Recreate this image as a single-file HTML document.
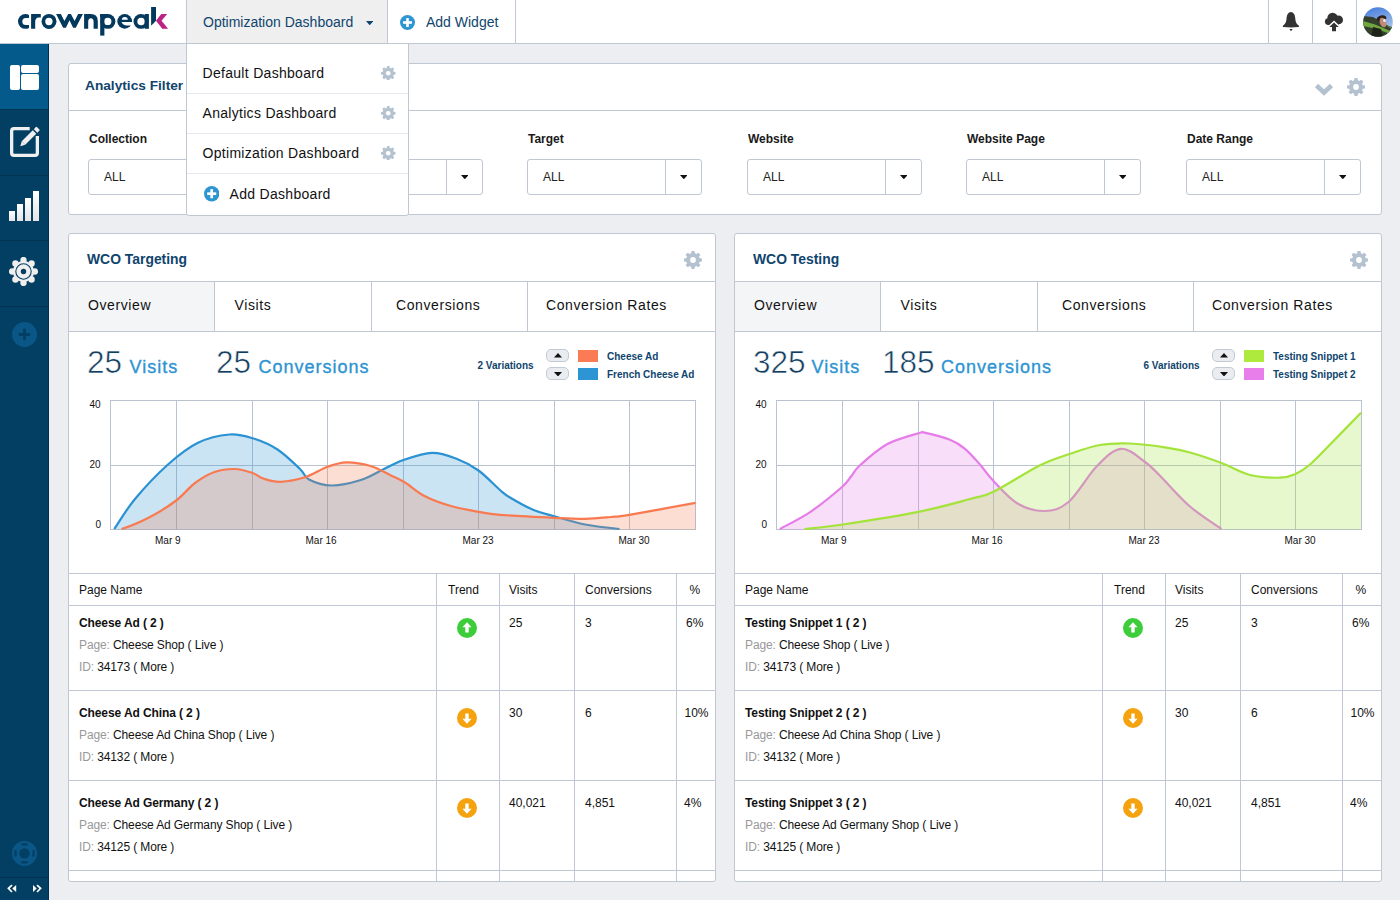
<!DOCTYPE html>
<html><head><meta charset="utf-8"><title>Optimization Dashboard</title>
<style>
html,body{margin:0;padding:0}
body{width:1400px;height:900px;position:relative;overflow:hidden;background:#eceef1;font-family:"Liberation Sans",sans-serif}
.t{position:absolute;line-height:1;white-space:nowrap}
.panel{position:absolute;background:#fff;border:1px solid #bfc7d2;border-radius:3px}
.sel{position:absolute;background:#fff;border:1px solid #bfc7d2;border-radius:3px}
.ub{position:absolute;width:21px;height:11px;background:#e9edf1;border:1px solid #c2cad4;border-radius:5px}
</style></head><body>
<div style="position:absolute;left:0px;top:0px;width:1400px;height:43px;background:#fff"></div><div style="position:absolute;left:0px;top:43px;width:1400px;height:1px;background:#bfc7d2"></div><svg style="position:absolute;left:0;top:0" width="180" height="43" viewBox="0 0 180 43"><defs><clipPath id="cc"><rect x="0" y="0" width="28.9" height="43"/></clipPath></defs><g fill="#03395d"><circle cx="25.4" cy="21.4" r="7.4" clip-path="url(#cc)"/><path d="M31.1 28.8 V14 H40.8 V17.4 H38.8 Q35.2 17.4 35.2 22 V28.8 Z"/><circle cx="49" cy="21.4" r="7.5"/><path d="M56.1 14 L60.9 14 L64.4 21 L68.2 14 L70.9 14 L74.6 21 L78.1 14 L82.9 14 L75.8 27.8 L73.1 27.8 L69.5 20.3 L65.9 27.8 L63.1 27.8 Z"/><path d="M84.1 28.8 V14 H90.8 Q97.8 14 97.8 21.2 V28.8 H93.6 V21.8 Q93.6 18.2 90.9 18.2 Q88.2 18.2 88.2 21.8 V28.8 Z"/><circle cx="107.9" cy="21.4" r="7.45"/><circle cx="124.7" cy="21.4" r="7.35"/><circle cx="140.9" cy="21.4" r="7.4"/></g><g fill="#fff"><path d="M30 18 H25.8 A3.5 3.5 0 0 0 25.8 25 H30 Z"/><circle cx="48.9" cy="21.5" r="3.65"/><circle cx="107.7" cy="21.4" r="3.7"/><path d="M121.8 19.8 A3 2.9 0 0 1 127.8 19.8 Z"/><path d="M121.5 22.1 H133 V25.4 H126.5 Q123 25.6 121.5 22.1 Z"/><circle cx="141.1" cy="21.45" r="3.75"/></g><g fill="#03395d"><rect x="100.2" y="14" width="4.2" height="21.6"/><rect x="100.2" y="14" width="7.5" height="3.3"/><rect x="144.7" y="14" width="4.2" height="14.8"/><path d="M151.1 7 H156 V20.7 L151.1 25.7 Z"/></g><path d="M156 20.7 L161.3 14 H167.2 L161.5 20.7 L168.1 28.8 H162.3 Z" fill="#bc2284"/></svg><div style="position:absolute;left:186px;top:0px;width:1px;height:43px;background:#bfc7d2"></div><div style="position:absolute;left:187px;top:0px;width:200px;height:43px;background:#efefef"></div><div style="position:absolute;left:387px;top:0px;width:1px;height:43px;background:#bfc7d2"></div><div class="t" style="left:203px;top:15.15px;font-size:14px;font-weight:normal;color:#0f456d;">Optimization Dashboard</div><svg style="position:absolute;left:365.7px;top:20.85px" width="7.4" height="4.3" viewBox="0 0 7.4 4.3"><path d="M0 0 L7.4 0 L3.7 4.3 Z" fill="#0f456d"/></svg><svg style="position:absolute;left:400.0px;top:15.0px" width="15.0" height="15.0" viewBox="0 0 15.0 15.0"><circle cx="7.5" cy="7.5" r="7.5" fill="#2e95d3"/><rect x="6.19" y="3.08" width="2.62" height="8.85" fill="#fff"/><rect x="3.08" y="6.19" width="8.85" height="2.62" fill="#fff"/></svg><div class="t" style="left:426px;top:15.15px;font-size:14px;font-weight:normal;color:#0f456d;">Add Widget</div><div style="position:absolute;left:515px;top:0px;width:1px;height:43px;background:#bfc7d2"></div><div style="position:absolute;left:1268px;top:0px;width:1px;height:43px;background:#bfc7d2"></div><div style="position:absolute;left:1312px;top:0px;width:1px;height:43px;background:#bfc7d2"></div><div style="position:absolute;left:1356px;top:0px;width:1px;height:43px;background:#bfc7d2"></div><svg style="position:absolute;left:1280px;top:10px" width="22" height="24" viewBox="0 0 22 24"><path d="M10.9 2 C8.3 2.5 6.9 4.3 6.6 7.8 C6.3 11.5 5.9 13.6 3.2 15.5 C2.4 16.1 2.7 17 3.6 17.1 Q11 17.9 18.2 17.1 C19.1 17 19.4 16.1 18.6 15.5 C15.9 13.6 15.5 11.5 15.2 7.8 C14.9 4.3 13.5 2.5 10.9 2 Z" fill="#333"/><path d="M9.3 19 H12.7 L11 21.2 Z" fill="#333"/></svg><svg style="position:absolute;left:1322px;top:10px" width="24" height="24" viewBox="0 0 24 24"><g fill="#333"><circle cx="10.6" cy="8.1" r="5.3"/><circle cx="16.6" cy="9.9" r="4.4"/><circle cx="6.3" cy="11.6" r="3.4"/><rect x="6.3" y="9.5" width="10.3" height="5.6"/></g><path d="M4.6 17.6 L12 10.6 L19.4 17.6 Z" fill="#fff"/><path d="M7.3 17 L12 12.5 L16.7 17 H14 V21.2 H10 V17 Z" fill="#333"/></svg><svg style="position:absolute;left:1363px;top:7px" width="30" height="30" viewBox="0 0 30 30"><defs><clipPath id="av"><circle cx="15" cy="15" r="14.8"/></clipPath><linearGradient id="sky" x1="0" y1="0" x2="0.3" y2="1"><stop offset="0" stop-color="#3f78dc"/><stop offset="1" stop-color="#b5cdea"/></linearGradient></defs><g clip-path="url(#av)"><rect width="30" height="30" fill="url(#sky)"/><path d="M0 9 L10 10 L22 17 L30 21 V30 H0 Z" fill="#34402c"/><path d="M0 14 L12 17.5 L30 25 V28 L14 22 L0 19 Z" fill="#6fa83e"/><path d="M30 20 L22 18 L30 23 Z" fill="#5c7a5a"/><ellipse cx="18.5" cy="11.5" rx="5" ry="3.2" fill="#2c211c" transform="rotate(-15 18.5 11.5)"/><ellipse cx="20" cy="15.5" rx="3.2" ry="5" fill="#c08a74" transform="rotate(-20 20 15.5)"/><ellipse cx="21.5" cy="13.5" rx="1.4" ry="1.8" fill="#e8e4e8"/><path d="M8 30 L10 20 L18 22 L20 30 Z" fill="#1f2418"/></g></svg><div style="position:absolute;left:0px;top:44px;width:48px;height:856px;background:#033f63"></div><div style="position:absolute;left:48px;top:44px;width:1px;height:856px;background:#022f4b"></div><div style="position:absolute;left:0px;top:44px;width:48px;height:65px;background:#045a8b"></div><div style="position:absolute;left:0px;top:109px;width:48px;height:1px;background:#033351"></div><div style="position:absolute;left:0px;top:175px;width:48px;height:1px;background:#033351"></div><div style="position:absolute;left:0px;top:240px;width:48px;height:1px;background:#033351"></div><div style="position:absolute;left:0px;top:306px;width:48px;height:1px;background:#033351"></div><div style="position:absolute;left:0px;top:877px;width:48px;height:1px;background:#033351"></div><div style="position:absolute;left:10px;top:65px;width:10px;height:25px;background:#fff;border-radius:2px"></div><div style="position:absolute;left:21px;top:65px;width:18px;height:8px;background:#fff;border-radius:2px"></div><div style="position:absolute;left:21px;top:74px;width:18px;height:16px;background:#fff;border-radius:2px"></div><svg style="position:absolute;left:8px;top:125px" width="34" height="34" viewBox="0 0 34 34"><path d="M21.7 3.65 H6 Q3.65 3.65 3.65 6 V28 Q3.65 30.35 6 30.35 H27 Q29.35 30.35 29.35 28 V11" fill="none" stroke="#f0f0f0" stroke-width="3.3"/><path d="M13.73 16.23 L24.73 5.23 L28.27 8.77 L17.27 19.77 Z" fill="#f0f0f0"/><path d="M13.73 16.23 L17.27 19.77 L12.3 21.2 Z" fill="#f0f0f0"/><path d="M25.83 4.13 L27.9 2.06 Q28.4 1.56 28.9 2.06 L31.45 4.6 Q31.95 5.1 31.45 5.6 L29.37 7.67 Z" fill="#f0f0f0"/></svg><div style="position:absolute;left:9px;top:211px;width:6px;height:10px;background:linear-gradient(#fff,#e4e4e4)"></div><div style="position:absolute;left:17px;top:204px;width:6px;height:17px;background:linear-gradient(#fff,#e4e4e4)"></div><div style="position:absolute;left:25px;top:197.5px;width:6px;height:23.5px;background:linear-gradient(#fff,#e4e4e4)"></div><div style="position:absolute;left:33px;top:191px;width:6px;height:30px;background:linear-gradient(#fff,#e4e4e4)"></div><svg style="position:absolute;left:9.2px;top:256.8px" width="29" height="29" viewBox="0 0 29 29"><g fill="#efefef"><circle cx="14.5" cy="14.5" r="10.6"/><circle cx="25.90" cy="14.50" r="3.2"/><circle cx="22.56" cy="22.56" r="3.2"/><circle cx="14.50" cy="25.90" r="3.2"/><circle cx="6.44" cy="22.56" r="3.2"/><circle cx="3.10" cy="14.50" r="3.2"/><circle cx="6.44" cy="6.44" r="3.2"/><circle cx="14.50" cy="3.10" r="3.2"/><circle cx="22.56" cy="6.44" r="3.2"/></g><circle cx="14.5" cy="14.5" r="7.7" fill="none" stroke="#033f63" stroke-width="1.1"/><circle cx="14.5" cy="14.5" r="2.7" fill="#033f63"/></svg><svg style="position:absolute;left:12.0px;top:322.0px" width="25.0" height="25.0" viewBox="0 0 25.0 25.0"><circle cx="12.5" cy="12.5" r="12.5" fill="#0a5787"/><rect x="11.10" y="6.75" width="2.80" height="11.50" fill="#033f63"/><rect x="6.75" y="11.10" width="11.50" height="2.80" fill="#033f63"/></svg><svg style="position:absolute;left:11px;top:840px" width="27" height="27" viewBox="0 0 27 27"><circle cx="13.5" cy="13.4" r="12.5" fill="#0a5787"/><circle cx="13.5" cy="13.4" r="5.2" fill="#033f63"/><g fill="#033f63"><rect x="10.1" y="3.25" width="6.8" height="2.3" rx="1.1"/><rect x="10.1" y="21.25" width="6.8" height="2.3" rx="1.1"/><rect x="3.35" y="10" width="2.3" height="6.8" rx="1.1"/><rect x="21.35" y="10" width="2.3" height="6.8" rx="1.1"/></g></svg><svg style="position:absolute;left:0;top:878px" width="49" height="22" viewBox="0 0 49 22"><path d="M12 7.1 L8.4 10.4 L12 14" fill="none" stroke="#fff" stroke-width="1.7"/><path d="M12.3 10.4 L16.2 7 V14 Z" fill="#fff"/><path d="M33 7 V14 L36.7 10.4 Z" fill="#fff"/><path d="M37 7.1 L40.6 10.4 L37 14" fill="none" stroke="#fff" stroke-width="1.7"/></svg><div class="panel" style="left:68px;top:63px;width:1312px;height:150px"></div><div style="position:absolute;left:69px;top:110px;width:1312px;height:1px;background:#bfc7d2"></div><div class="t" style="left:85px;top:79.40px;font-size:13.7px;font-weight:bold;color:#0f456d;">Analytics Filter</div><svg style="position:absolute;left:1314px;top:81px" width="20" height="16" viewBox="0 0 20 16"><path d="M2.5 4.5 L10 11.5 L17.5 4.5" fill="none" stroke="#b4c2d0" stroke-width="4.6"/></svg><svg style="position:absolute;left:1347px;top:78px" width="18" height="18" viewBox="0 0 18 18"><circle cx="9.0" cy="9.0" r="6.93" fill="#b4c2d0"/><rect x="7.20" y="0" width="3.60" height="9.00" rx="1.08" fill="#b4c2d0" transform="rotate(0 9.0 9.0)"/><rect x="7.20" y="0" width="3.60" height="9.00" rx="1.08" fill="#b4c2d0" transform="rotate(45 9.0 9.0)"/><rect x="7.20" y="0" width="3.60" height="9.00" rx="1.08" fill="#b4c2d0" transform="rotate(90 9.0 9.0)"/><rect x="7.20" y="0" width="3.60" height="9.00" rx="1.08" fill="#b4c2d0" transform="rotate(135 9.0 9.0)"/><rect x="7.20" y="0" width="3.60" height="9.00" rx="1.08" fill="#b4c2d0" transform="rotate(180 9.0 9.0)"/><rect x="7.20" y="0" width="3.60" height="9.00" rx="1.08" fill="#b4c2d0" transform="rotate(225 9.0 9.0)"/><rect x="7.20" y="0" width="3.60" height="9.00" rx="1.08" fill="#b4c2d0" transform="rotate(270 9.0 9.0)"/><rect x="7.20" y="0" width="3.60" height="9.00" rx="1.08" fill="#b4c2d0" transform="rotate(315 9.0 9.0)"/><circle cx="9.0" cy="9.0" r="2.88" fill="#fff"/></svg><div class="t" style="left:89px;top:132.84px;font-size:12px;font-weight:bold;color:#1a1a1a;">Collection</div><div class="sel" style="left:88px;top:159px;width:173px;height:34px"></div><div style="position:absolute;left:226px;top:160px;width:1px;height:34px;background:#bfc7d2"></div><div class="t" style="left:104px;top:170.84px;font-size:12px;font-weight:normal;color:#222;">ALL</div><svg style="position:absolute;left:240.5px;top:175.04999999999998px" width="7.6" height="4.3" viewBox="0 0 7.6 4.3"><path d="M0 0 L7.6 0 L3.8 4.3 Z" fill="#111"/></svg><div class="t" style="left:309px;top:132.84px;font-size:12px;font-weight:bold;color:#1a1a1a;">Segment</div><div class="sel" style="left:308px;top:159px;width:173px;height:34px"></div><div style="position:absolute;left:446px;top:160px;width:1px;height:34px;background:#bfc7d2"></div><div class="t" style="left:324px;top:170.84px;font-size:12px;font-weight:normal;color:#222;">ALL</div><svg style="position:absolute;left:460.5px;top:175.04999999999998px" width="7.6" height="4.3" viewBox="0 0 7.6 4.3"><path d="M0 0 L7.6 0 L3.8 4.3 Z" fill="#111"/></svg><div class="t" style="left:528px;top:132.84px;font-size:12px;font-weight:bold;color:#1a1a1a;">Target</div><div class="sel" style="left:527px;top:159px;width:173px;height:34px"></div><div style="position:absolute;left:665px;top:160px;width:1px;height:34px;background:#bfc7d2"></div><div class="t" style="left:543px;top:170.84px;font-size:12px;font-weight:normal;color:#222;">ALL</div><svg style="position:absolute;left:679.5px;top:175.04999999999998px" width="7.6" height="4.3" viewBox="0 0 7.6 4.3"><path d="M0 0 L7.6 0 L3.8 4.3 Z" fill="#111"/></svg><div class="t" style="left:748px;top:132.84px;font-size:12px;font-weight:bold;color:#1a1a1a;">Website</div><div class="sel" style="left:747px;top:159px;width:173px;height:34px"></div><div style="position:absolute;left:885px;top:160px;width:1px;height:34px;background:#bfc7d2"></div><div class="t" style="left:763px;top:170.84px;font-size:12px;font-weight:normal;color:#222;">ALL</div><svg style="position:absolute;left:899.5px;top:175.04999999999998px" width="7.6" height="4.3" viewBox="0 0 7.6 4.3"><path d="M0 0 L7.6 0 L3.8 4.3 Z" fill="#111"/></svg><div class="t" style="left:967px;top:132.84px;font-size:12px;font-weight:bold;color:#1a1a1a;">Website Page</div><div class="sel" style="left:966px;top:159px;width:173px;height:34px"></div><div style="position:absolute;left:1104px;top:160px;width:1px;height:34px;background:#bfc7d2"></div><div class="t" style="left:982px;top:170.84px;font-size:12px;font-weight:normal;color:#222;">ALL</div><svg style="position:absolute;left:1118.5px;top:175.04999999999998px" width="7.6" height="4.3" viewBox="0 0 7.6 4.3"><path d="M0 0 L7.6 0 L3.8 4.3 Z" fill="#111"/></svg><div class="t" style="left:1187px;top:132.84px;font-size:12px;font-weight:bold;color:#1a1a1a;">Date Range</div><div class="sel" style="left:1186px;top:159px;width:173px;height:34px"></div><div style="position:absolute;left:1324px;top:160px;width:1px;height:34px;background:#bfc7d2"></div><div class="t" style="left:1202px;top:170.84px;font-size:12px;font-weight:normal;color:#222;">ALL</div><svg style="position:absolute;left:1338.5px;top:175.04999999999998px" width="7.6" height="4.3" viewBox="0 0 7.6 4.3"><path d="M0 0 L7.6 0 L3.8 4.3 Z" fill="#111"/></svg><div class="panel" style="left:68px;top:233px;width:646px;height:647px"></div><div class="t" style="left:87px;top:253.23px;font-size:13.9px;font-weight:bold;color:#0f456d;">WCO Targeting</div><svg style="position:absolute;left:684px;top:251px" width="18" height="18" viewBox="0 0 18 18"><circle cx="9.0" cy="9.0" r="6.93" fill="#b4c2d0"/><rect x="7.20" y="0" width="3.60" height="9.00" rx="1.08" fill="#b4c2d0" transform="rotate(0 9.0 9.0)"/><rect x="7.20" y="0" width="3.60" height="9.00" rx="1.08" fill="#b4c2d0" transform="rotate(45 9.0 9.0)"/><rect x="7.20" y="0" width="3.60" height="9.00" rx="1.08" fill="#b4c2d0" transform="rotate(90 9.0 9.0)"/><rect x="7.20" y="0" width="3.60" height="9.00" rx="1.08" fill="#b4c2d0" transform="rotate(135 9.0 9.0)"/><rect x="7.20" y="0" width="3.60" height="9.00" rx="1.08" fill="#b4c2d0" transform="rotate(180 9.0 9.0)"/><rect x="7.20" y="0" width="3.60" height="9.00" rx="1.08" fill="#b4c2d0" transform="rotate(225 9.0 9.0)"/><rect x="7.20" y="0" width="3.60" height="9.00" rx="1.08" fill="#b4c2d0" transform="rotate(270 9.0 9.0)"/><rect x="7.20" y="0" width="3.60" height="9.00" rx="1.08" fill="#b4c2d0" transform="rotate(315 9.0 9.0)"/><circle cx="9.0" cy="9.0" r="2.88" fill="#fff"/></svg><div style="position:absolute;left:69px;top:281px;width:646px;height:1px;background:#bfc7d2"></div><div style="position:absolute;left:69px;top:282px;width:145px;height:49px;background:#f4f5f7"></div><div style="position:absolute;left:214px;top:282px;width:1px;height:49px;background:#bfc7d2"></div><div style="position:absolute;left:371px;top:282px;width:1px;height:49px;background:#bfc7d2"></div><div style="position:absolute;left:527px;top:282px;width:1px;height:49px;background:#bfc7d2"></div><div style="position:absolute;left:69px;top:331px;width:646px;height:1px;background:#bfc7d2"></div><div class="t" style="left:88px;top:298.15px;font-size:14px;font-weight:normal;color:#111;letter-spacing:0.6px;">Overview</div><div class="t" style="left:234.5px;top:298.15px;font-size:14px;font-weight:normal;color:#111;letter-spacing:0.6px;">Visits</div><div class="t" style="left:396px;top:298.15px;font-size:14px;font-weight:normal;color:#111;letter-spacing:0.6px;">Conversions</div><div class="t" style="left:546px;top:298.15px;font-size:14px;font-weight:normal;color:#111;letter-spacing:0.6px;">Conversion Rates</div><div class="t" style="left:87px;top:345.91px;font-size:32px;font-weight:normal;color:#133e60;-webkit-text-stroke:0.6px #fff;transform:scaleX(0.985);transform-origin:0 0">25</div><div class="t" style="left:129.5px;top:357.76px;font-size:18px;font-weight:normal;color:#2e94d2;letter-spacing:1.0px;-webkit-text-stroke:0.35px #2e94d2">Visits</div><div class="t" style="left:216px;top:345.91px;font-size:32px;font-weight:normal;color:#133e60;-webkit-text-stroke:0.6px #fff;transform:scaleX(0.985);transform-origin:0 0">25</div><div class="t" style="left:258.5px;top:357.76px;font-size:18px;font-weight:normal;color:#2e94d2;letter-spacing:1.0px;-webkit-text-stroke:0.35px #2e94d2">Conversions</div><div class="t" style="left:477.5px;top:360.74px;font-size:10px;font-weight:bold;color:#0f456d;">2 Variations</div><div class="ub" style="left:546px;top:349px"></div><div class="ub" style="left:546px;top:367px"></div><svg style="position:absolute;left:553.8px;top:353.25px" width="8" height="4.5" viewBox="0 0 8 4.5"><path d="M0 4.5 L8 4.5 L4 0 Z" fill="#111"/></svg><svg style="position:absolute;left:553.8px;top:371.75px" width="8" height="4.5" viewBox="0 0 8 4.5"><path d="M0 0 L8 0 L4.0 4.5 Z" fill="#111"/></svg><div style="position:absolute;left:578px;top:350px;width:20px;height:12px;background:#fa7b56"></div><div style="position:absolute;left:578px;top:368px;width:20px;height:12px;background:#2e95d4"></div><div class="t" style="left:607px;top:352.34px;font-size:10px;font-weight:bold;color:#0f456d;">Cheese Ad</div><div class="t" style="left:607px;top:370.34px;font-size:10px;font-weight:bold;color:#0f456d;">French Cheese Ad</div><svg style="position:absolute;left:0;top:0" width="1400" height="900" viewBox="0 0 1400 900"><g stroke="#bac3d0" stroke-width="1" fill="none"><path d="M110.5 400 V529.5"/><path d="M176.5 400 V529.5"/><path d="M252.5 400 V529.5"/><path d="M327.5 400 V529.5"/><path d="M403.5 400 V529.5"/><path d="M478.5 400 V529.5"/><path d="M554.5 400 V529.5"/><path d="M629.5 400 V529.5"/><path d="M695.5 400 V529.5"/><path d="M110 400.5 H696"/><path d="M110 465.5 H696"/><path d="M110 529.5 H696"/></g><path d="M114.30 529.00 C117.75 524.00 126.05 509.75 135.00 499.00 C143.95 488.25 157.50 473.87 168.00 464.50 C178.50 455.13 187.75 447.80 198.00 442.80 C208.25 437.80 220.38 435.25 229.50 434.50 C238.62 433.75 244.70 435.80 252.70 438.30 C260.70 440.80 269.62 444.38 277.50 449.50 C285.38 454.62 294.75 464.00 300.00 469.00 C305.25 474.00 303.75 476.75 309.00 479.50 C314.25 482.25 323.00 485.37 331.50 485.50 C340.00 485.63 351.50 482.92 360.00 480.30 C368.50 477.68 375.25 473.18 382.50 469.80 C389.75 466.42 395.25 462.83 403.50 460.00 C411.75 457.17 423.25 453.05 432.00 452.80 C440.75 452.55 448.25 455.55 456.00 458.50 C463.75 461.45 471.17 465.25 478.50 470.50 C485.83 475.75 494.75 485.50 500.00 490.00 C505.25 494.50 504.58 494.25 510.00 497.50 C515.42 500.75 525.12 506.37 532.50 509.50 C539.88 512.63 545.55 513.80 554.30 516.30 C563.05 518.80 574.13 522.38 585.00 524.50 C595.87 526.62 608.67 527.92 619.50 529.00 L619.50 529.5 L114.30 529.5 Z" fill="#2a92d2" fill-opacity="0.25"/><path d="M114.30 529.00 C117.75 524.00 126.05 509.75 135.00 499.00 C143.95 488.25 157.50 473.87 168.00 464.50 C178.50 455.13 187.75 447.80 198.00 442.80 C208.25 437.80 220.38 435.25 229.50 434.50 C238.62 433.75 244.70 435.80 252.70 438.30 C260.70 440.80 269.62 444.38 277.50 449.50 C285.38 454.62 294.75 464.00 300.00 469.00 C305.25 474.00 303.75 476.75 309.00 479.50 C314.25 482.25 323.00 485.37 331.50 485.50 C340.00 485.63 351.50 482.92 360.00 480.30 C368.50 477.68 375.25 473.18 382.50 469.80 C389.75 466.42 395.25 462.83 403.50 460.00 C411.75 457.17 423.25 453.05 432.00 452.80 C440.75 452.55 448.25 455.55 456.00 458.50 C463.75 461.45 471.17 465.25 478.50 470.50 C485.83 475.75 494.75 485.50 500.00 490.00 C505.25 494.50 504.58 494.25 510.00 497.50 C515.42 500.75 525.12 506.37 532.50 509.50 C539.88 512.63 545.55 513.80 554.30 516.30 C563.05 518.80 574.13 522.38 585.00 524.50 C595.87 526.62 608.67 527.92 619.50 529.00" fill="none" stroke="#2a92d2" stroke-width="2.2" stroke-linecap="butt"/><path d="M121.50 529.00 C130.67 526.17 140.88 521.75 150.00 517.00 C159.12 512.25 168.70 506.17 176.20 500.50 C183.70 494.83 188.62 487.75 195.00 483.00 C201.38 478.25 207.88 474.33 214.50 472.00 C221.12 469.67 228.45 468.87 234.70 469.00 C240.95 469.13 247.12 471.17 252.00 472.80 C256.88 474.43 259.25 477.30 264.00 478.80 C268.75 480.30 273.67 482.05 280.50 481.80 C287.33 481.55 297.18 479.80 305.00 477.30 C312.82 474.80 320.48 469.30 327.40 466.80 C334.32 464.30 339.32 462.43 346.50 462.30 C353.68 462.17 363.25 463.88 370.50 466.00 C377.75 468.12 384.25 472.25 390.00 475.00 C395.75 477.75 399.25 479.00 405.00 482.50 C410.75 486.00 417.00 492.12 424.50 496.00 C432.00 499.88 441.00 503.17 450.00 505.80 C459.00 508.43 470.17 510.30 478.50 511.80 C486.83 513.30 487.37 513.80 500.00 514.80 C512.63 515.80 540.13 517.13 554.30 517.80 C568.47 518.47 575.63 518.93 585.00 518.80 C594.37 518.67 603.12 517.67 610.50 517.00 C617.88 516.33 615.13 517.17 629.30 514.80 C643.47 512.43 684.47 504.80 695.50 502.80 L695.50 529.5 L121.50 529.5 Z" fill="#f97a50" fill-opacity="0.25"/><path d="M121.50 529.00 C130.67 526.17 140.88 521.75 150.00 517.00 C159.12 512.25 168.70 506.17 176.20 500.50 C183.70 494.83 188.62 487.75 195.00 483.00 C201.38 478.25 207.88 474.33 214.50 472.00 C221.12 469.67 228.45 468.87 234.70 469.00 C240.95 469.13 247.12 471.17 252.00 472.80 C256.88 474.43 259.25 477.30 264.00 478.80 C268.75 480.30 273.67 482.05 280.50 481.80 C287.33 481.55 297.18 479.80 305.00 477.30 C312.82 474.80 320.48 469.30 327.40 466.80 C334.32 464.30 339.32 462.43 346.50 462.30 C353.68 462.17 363.25 463.88 370.50 466.00 C377.75 468.12 384.25 472.25 390.00 475.00 C395.75 477.75 399.25 479.00 405.00 482.50 C410.75 486.00 417.00 492.12 424.50 496.00 C432.00 499.88 441.00 503.17 450.00 505.80 C459.00 508.43 470.17 510.30 478.50 511.80 C486.83 513.30 487.37 513.80 500.00 514.80 C512.63 515.80 540.13 517.13 554.30 517.80 C568.47 518.47 575.63 518.93 585.00 518.80 C594.37 518.67 603.12 517.67 610.50 517.00 C617.88 516.33 615.13 517.17 629.30 514.80 C643.47 512.43 684.47 504.80 695.50 502.80" fill="none" stroke="#f97a50" stroke-width="2.2" stroke-linecap="butt"/></svg><div class="t" style="left:89.5px;top:399.54px;font-size:10px;font-weight:normal;color:#111;">40</div><div class="t" style="left:89.5px;top:460.04px;font-size:10px;font-weight:normal;color:#111;">20</div><div class="t" style="left:95.5px;top:520.03px;font-size:10px;font-weight:normal;color:#111;">0</div><div class="t" style="left:155px;top:535.83px;font-size:10px;font-weight:normal;color:#111;">Mar 9</div><div class="t" style="left:305.5px;top:535.83px;font-size:10px;font-weight:normal;color:#111;">Mar 16</div><div class="t" style="left:462.5px;top:535.83px;font-size:10px;font-weight:normal;color:#111;">Mar 23</div><div class="t" style="left:618.5px;top:535.83px;font-size:10px;font-weight:normal;color:#111;">Mar 30</div><div style="position:absolute;left:69px;top:573px;width:646px;height:1px;background:#bfc7d2"></div><div style="position:absolute;left:69px;top:605px;width:646px;height:1px;background:#bfc7d2"></div><div style="position:absolute;left:69px;top:690px;width:646px;height:1px;background:#bfc7d2"></div><div style="position:absolute;left:69px;top:780px;width:646px;height:1px;background:#bfc7d2"></div><div style="position:absolute;left:69px;top:870px;width:646px;height:1px;background:#bfc7d2"></div><div style="position:absolute;left:436px;top:573px;width:1px;height:308px;background:#bfc7d2"></div><div style="position:absolute;left:499px;top:573px;width:1px;height:308px;background:#bfc7d2"></div><div style="position:absolute;left:574px;top:573px;width:1px;height:308px;background:#bfc7d2"></div><div style="position:absolute;left:676px;top:573px;width:1px;height:308px;background:#bfc7d2"></div><div class="t" style="left:79px;top:583.84px;font-size:12px;font-weight:normal;color:#111;">Page Name</div><div class="t" style="left:448px;top:583.84px;font-size:12px;font-weight:normal;color:#111;">Trend</div><div class="t" style="left:509px;top:583.84px;font-size:12px;font-weight:normal;color:#111;">Visits</div><div class="t" style="left:585px;top:583.84px;font-size:12px;font-weight:normal;color:#111;">Conversions</div><div class="t" style="left:689.5px;top:583.84px;font-size:12px;font-weight:normal;color:#111;">%</div><div class="t" style="left:79px;top:616.84px;font-size:12px;font-weight:bold;color:#111;letter-spacing:-0.1px;">Cheese Ad ( 2 )</div><div class="t" style="left:79px;top:638.84px;font-size:12px;font-weight:normal;color:#111;letter-spacing:-0.12px;"><span style="color:#999">Page:</span> Cheese Shop ( Live )</div><div class="t" style="left:79px;top:660.84px;font-size:12px;font-weight:normal;color:#111;letter-spacing:-0.12px;"><span style="color:#999">ID:</span> 34173 ( More )</div><svg style="position:absolute;left:457px;top:618px" width="20" height="20" viewBox="0 0 20 20"><circle cx="10" cy="10" r="10" fill="#3dcc3a"/><path d="M10 4.3 L14.6 9.2 H11.7 V14.6 H8.3 V9.2 H5.4 Z" fill="#fff"/></svg><div class="t" style="left:509px;top:616.84px;font-size:12px;font-weight:normal;color:#111;">25</div><div class="t" style="left:585px;top:616.84px;font-size:12px;font-weight:normal;color:#111;">3</div><div class="t" style="left:686px;top:616.84px;font-size:12px;font-weight:normal;color:#111;">6%</div><div class="t" style="left:79px;top:706.84px;font-size:12px;font-weight:bold;color:#111;letter-spacing:-0.1px;">Cheese Ad China ( 2 )</div><div class="t" style="left:79px;top:728.84px;font-size:12px;font-weight:normal;color:#111;letter-spacing:-0.12px;"><span style="color:#999">Page:</span> Cheese Ad China Shop ( Live )</div><div class="t" style="left:79px;top:750.84px;font-size:12px;font-weight:normal;color:#111;letter-spacing:-0.12px;"><span style="color:#999">ID:</span> 34132 ( More )</div><svg style="position:absolute;left:457px;top:708px" width="20" height="20" viewBox="0 0 20 20"><circle cx="10" cy="10" r="10" fill="#f5a20f"/><path d="M10 15.7 L14.6 10.8 H11.7 V5.4 H8.3 V10.8 H5.4 Z" fill="#fff"/></svg><div class="t" style="left:509px;top:706.84px;font-size:12px;font-weight:normal;color:#111;">30</div><div class="t" style="left:585px;top:706.84px;font-size:12px;font-weight:normal;color:#111;">6</div><div class="t" style="left:684.5px;top:706.84px;font-size:12px;font-weight:normal;color:#111;">10%</div><div class="t" style="left:79px;top:796.84px;font-size:12px;font-weight:bold;color:#111;letter-spacing:-0.1px;">Cheese Ad Germany ( 2 )</div><div class="t" style="left:79px;top:818.84px;font-size:12px;font-weight:normal;color:#111;letter-spacing:-0.12px;"><span style="color:#999">Page:</span> Cheese Ad Germany Shop ( Live )</div><div class="t" style="left:79px;top:840.84px;font-size:12px;font-weight:normal;color:#111;letter-spacing:-0.12px;"><span style="color:#999">ID:</span> 34125 ( More )</div><svg style="position:absolute;left:457px;top:798px" width="20" height="20" viewBox="0 0 20 20"><circle cx="10" cy="10" r="10" fill="#f5a20f"/><path d="M10 15.7 L14.6 10.8 H11.7 V5.4 H8.3 V10.8 H5.4 Z" fill="#fff"/></svg><div class="t" style="left:509px;top:796.84px;font-size:12px;font-weight:normal;color:#111;">40,021</div><div class="t" style="left:585px;top:796.84px;font-size:12px;font-weight:normal;color:#111;">4,851</div><div class="t" style="left:684px;top:796.84px;font-size:12px;font-weight:normal;color:#111;">4%</div><div class="panel" style="left:734px;top:233px;width:646px;height:647px"></div><div class="t" style="left:753px;top:253.23px;font-size:13.9px;font-weight:bold;color:#0f456d;">WCO Testing</div><svg style="position:absolute;left:1350px;top:251px" width="18" height="18" viewBox="0 0 18 18"><circle cx="9.0" cy="9.0" r="6.93" fill="#b4c2d0"/><rect x="7.20" y="0" width="3.60" height="9.00" rx="1.08" fill="#b4c2d0" transform="rotate(0 9.0 9.0)"/><rect x="7.20" y="0" width="3.60" height="9.00" rx="1.08" fill="#b4c2d0" transform="rotate(45 9.0 9.0)"/><rect x="7.20" y="0" width="3.60" height="9.00" rx="1.08" fill="#b4c2d0" transform="rotate(90 9.0 9.0)"/><rect x="7.20" y="0" width="3.60" height="9.00" rx="1.08" fill="#b4c2d0" transform="rotate(135 9.0 9.0)"/><rect x="7.20" y="0" width="3.60" height="9.00" rx="1.08" fill="#b4c2d0" transform="rotate(180 9.0 9.0)"/><rect x="7.20" y="0" width="3.60" height="9.00" rx="1.08" fill="#b4c2d0" transform="rotate(225 9.0 9.0)"/><rect x="7.20" y="0" width="3.60" height="9.00" rx="1.08" fill="#b4c2d0" transform="rotate(270 9.0 9.0)"/><rect x="7.20" y="0" width="3.60" height="9.00" rx="1.08" fill="#b4c2d0" transform="rotate(315 9.0 9.0)"/><circle cx="9.0" cy="9.0" r="2.88" fill="#fff"/></svg><div style="position:absolute;left:735px;top:281px;width:646px;height:1px;background:#bfc7d2"></div><div style="position:absolute;left:735px;top:282px;width:145px;height:49px;background:#f4f5f7"></div><div style="position:absolute;left:880px;top:282px;width:1px;height:49px;background:#bfc7d2"></div><div style="position:absolute;left:1037px;top:282px;width:1px;height:49px;background:#bfc7d2"></div><div style="position:absolute;left:1193px;top:282px;width:1px;height:49px;background:#bfc7d2"></div><div style="position:absolute;left:735px;top:331px;width:646px;height:1px;background:#bfc7d2"></div><div class="t" style="left:754px;top:298.15px;font-size:14px;font-weight:normal;color:#111;letter-spacing:0.6px;">Overview</div><div class="t" style="left:900.5px;top:298.15px;font-size:14px;font-weight:normal;color:#111;letter-spacing:0.6px;">Visits</div><div class="t" style="left:1062px;top:298.15px;font-size:14px;font-weight:normal;color:#111;letter-spacing:0.6px;">Conversions</div><div class="t" style="left:1212px;top:298.15px;font-size:14px;font-weight:normal;color:#111;letter-spacing:0.6px;">Conversion Rates</div><div class="t" style="left:752.5px;top:345.91px;font-size:32px;font-weight:normal;color:#133e60;-webkit-text-stroke:0.6px #fff;transform:scaleX(0.985);transform-origin:0 0">325</div><div class="t" style="left:811.5px;top:357.76px;font-size:18px;font-weight:normal;color:#2e94d2;letter-spacing:1.0px;-webkit-text-stroke:0.35px #2e94d2">Visits</div><div class="t" style="left:881.5px;top:345.91px;font-size:32px;font-weight:normal;color:#133e60;-webkit-text-stroke:0.6px #fff;transform:scaleX(0.985);transform-origin:0 0">185</div><div class="t" style="left:941px;top:357.76px;font-size:18px;font-weight:normal;color:#2e94d2;letter-spacing:1.0px;-webkit-text-stroke:0.35px #2e94d2">Conversions</div><div class="t" style="left:1143.5px;top:360.74px;font-size:10px;font-weight:bold;color:#0f456d;">6 Variations</div><div class="ub" style="left:1212px;top:349px"></div><div class="ub" style="left:1212px;top:367px"></div><svg style="position:absolute;left:1219.8px;top:353.25px" width="8" height="4.5" viewBox="0 0 8 4.5"><path d="M0 4.5 L8 4.5 L4 0 Z" fill="#111"/></svg><svg style="position:absolute;left:1219.8px;top:371.75px" width="8" height="4.5" viewBox="0 0 8 4.5"><path d="M0 0 L8 0 L4.0 4.5 Z" fill="#111"/></svg><div style="position:absolute;left:1244px;top:350px;width:20px;height:12px;background:#aee93e"></div><div style="position:absolute;left:1244px;top:368px;width:20px;height:12px;background:#e77ee9"></div><div class="t" style="left:1273px;top:352.34px;font-size:10px;font-weight:bold;color:#0f456d;">Testing Snippet 1</div><div class="t" style="left:1273px;top:370.34px;font-size:10px;font-weight:bold;color:#0f456d;">Testing Snippet 2</div><svg style="position:absolute;left:0;top:0" width="1400" height="900" viewBox="0 0 1400 900"><g stroke="#bac3d0" stroke-width="1" fill="none"><path d="M776.5 400 V529.5"/><path d="M842.5 400 V529.5"/><path d="M918.5 400 V529.5"/><path d="M993.5 400 V529.5"/><path d="M1069.5 400 V529.5"/><path d="M1144.5 400 V529.5"/><path d="M1220.5 400 V529.5"/><path d="M1295.5 400 V529.5"/><path d="M1361.5 400 V529.5"/><path d="M776 400.5 H1362"/><path d="M776 465.5 H1362"/><path d="M776 529.5 H1362"/></g><path d="M779.80 529.00 C784.92 526.13 800.13 518.80 810.50 511.80 C820.87 504.80 835.25 492.88 842.00 487.00 C848.75 481.12 848.00 480.12 851.00 476.50 C854.00 472.88 854.00 470.67 860.00 465.30 C866.00 459.93 877.25 449.63 887.00 444.30 C896.75 438.97 912.25 435.23 918.50 433.30 C924.75 431.37 919.25 431.62 924.50 432.70 C929.75 433.78 943.25 437.12 950.00 439.80 C956.75 442.48 960.00 444.68 965.00 448.80 C970.00 452.92 975.25 459.13 980.00 464.50 C984.75 469.87 987.25 474.50 993.50 481.00 C999.75 487.50 1009.00 498.50 1017.50 503.50 C1026.00 508.50 1036.00 511.25 1044.50 511.00 C1053.00 510.75 1059.75 509.50 1068.50 502.00 C1077.25 494.50 1088.25 474.87 1097.00 466.00 C1105.75 457.13 1113.08 449.55 1121.00 448.80 C1128.92 448.05 1138.00 457.00 1144.50 461.50 C1151.00 466.00 1152.42 468.30 1160.00 475.80 C1167.58 483.30 1179.75 497.63 1190.00 506.50 C1200.25 515.37 1216.25 525.25 1221.50 529.00 L1221.50 529.5 L779.80 529.5 Z" fill="#e57ce8" fill-opacity="0.25"/><path d="M779.80 529.00 C784.92 526.13 800.13 518.80 810.50 511.80 C820.87 504.80 835.25 492.88 842.00 487.00 C848.75 481.12 848.00 480.12 851.00 476.50 C854.00 472.88 854.00 470.67 860.00 465.30 C866.00 459.93 877.25 449.63 887.00 444.30 C896.75 438.97 912.25 435.23 918.50 433.30 C924.75 431.37 919.25 431.62 924.50 432.70 C929.75 433.78 943.25 437.12 950.00 439.80 C956.75 442.48 960.00 444.68 965.00 448.80 C970.00 452.92 975.25 459.13 980.00 464.50 C984.75 469.87 987.25 474.50 993.50 481.00 C999.75 487.50 1009.00 498.50 1017.50 503.50 C1026.00 508.50 1036.00 511.25 1044.50 511.00 C1053.00 510.75 1059.75 509.50 1068.50 502.00 C1077.25 494.50 1088.25 474.87 1097.00 466.00 C1105.75 457.13 1113.08 449.55 1121.00 448.80 C1128.92 448.05 1138.00 457.00 1144.50 461.50 C1151.00 466.00 1152.42 468.30 1160.00 475.80 C1167.58 483.30 1179.75 497.63 1190.00 506.50 C1200.25 515.37 1216.25 525.25 1221.50 529.00" fill="none" stroke="#e57ce8" stroke-width="2.2" stroke-linecap="butt"/><path d="M804.50 529.00 C810.88 528.25 823.80 527.37 842.80 524.50 C861.80 521.63 897.30 516.05 918.50 511.80 C939.70 507.55 957.50 502.33 970.00 499.00 C982.50 495.67 981.83 497.42 993.50 491.80 C1005.17 486.18 1027.33 471.60 1040.00 465.30 C1052.67 459.00 1059.50 457.38 1069.50 454.00 C1079.50 450.62 1089.92 446.75 1100.00 445.00 C1110.08 443.25 1119.17 443.12 1130.00 443.50 C1140.83 443.88 1155.00 445.80 1165.00 447.30 C1175.00 448.80 1180.58 449.88 1190.00 452.50 C1199.42 455.12 1211.50 459.25 1221.50 463.00 C1231.50 466.75 1240.25 472.55 1250.00 475.00 C1259.75 477.45 1272.50 477.82 1280.00 477.70 C1287.50 477.58 1290.00 476.50 1295.00 474.30 C1300.00 472.10 1303.75 469.88 1310.00 464.50 C1316.25 459.12 1324.00 450.62 1332.50 442.00 C1341.00 433.38 1356.25 417.67 1361.00 412.80 L1361.00 529.5 L804.50 529.5 Z" fill="#a4e33a" fill-opacity="0.25"/><path d="M804.50 529.00 C810.88 528.25 823.80 527.37 842.80 524.50 C861.80 521.63 897.30 516.05 918.50 511.80 C939.70 507.55 957.50 502.33 970.00 499.00 C982.50 495.67 981.83 497.42 993.50 491.80 C1005.17 486.18 1027.33 471.60 1040.00 465.30 C1052.67 459.00 1059.50 457.38 1069.50 454.00 C1079.50 450.62 1089.92 446.75 1100.00 445.00 C1110.08 443.25 1119.17 443.12 1130.00 443.50 C1140.83 443.88 1155.00 445.80 1165.00 447.30 C1175.00 448.80 1180.58 449.88 1190.00 452.50 C1199.42 455.12 1211.50 459.25 1221.50 463.00 C1231.50 466.75 1240.25 472.55 1250.00 475.00 C1259.75 477.45 1272.50 477.82 1280.00 477.70 C1287.50 477.58 1290.00 476.50 1295.00 474.30 C1300.00 472.10 1303.75 469.88 1310.00 464.50 C1316.25 459.12 1324.00 450.62 1332.50 442.00 C1341.00 433.38 1356.25 417.67 1361.00 412.80" fill="none" stroke="#a4e33a" stroke-width="2.2" stroke-linecap="butt"/></svg><div class="t" style="left:755.5px;top:399.54px;font-size:10px;font-weight:normal;color:#111;">40</div><div class="t" style="left:755.5px;top:460.04px;font-size:10px;font-weight:normal;color:#111;">20</div><div class="t" style="left:761.5px;top:520.03px;font-size:10px;font-weight:normal;color:#111;">0</div><div class="t" style="left:821px;top:535.83px;font-size:10px;font-weight:normal;color:#111;">Mar 9</div><div class="t" style="left:971.5px;top:535.83px;font-size:10px;font-weight:normal;color:#111;">Mar 16</div><div class="t" style="left:1128.5px;top:535.83px;font-size:10px;font-weight:normal;color:#111;">Mar 23</div><div class="t" style="left:1284.5px;top:535.83px;font-size:10px;font-weight:normal;color:#111;">Mar 30</div><div style="position:absolute;left:735px;top:573px;width:646px;height:1px;background:#bfc7d2"></div><div style="position:absolute;left:735px;top:605px;width:646px;height:1px;background:#bfc7d2"></div><div style="position:absolute;left:735px;top:690px;width:646px;height:1px;background:#bfc7d2"></div><div style="position:absolute;left:735px;top:780px;width:646px;height:1px;background:#bfc7d2"></div><div style="position:absolute;left:735px;top:870px;width:646px;height:1px;background:#bfc7d2"></div><div style="position:absolute;left:1102px;top:573px;width:1px;height:308px;background:#bfc7d2"></div><div style="position:absolute;left:1165px;top:573px;width:1px;height:308px;background:#bfc7d2"></div><div style="position:absolute;left:1240px;top:573px;width:1px;height:308px;background:#bfc7d2"></div><div style="position:absolute;left:1342px;top:573px;width:1px;height:308px;background:#bfc7d2"></div><div class="t" style="left:745px;top:583.84px;font-size:12px;font-weight:normal;color:#111;">Page Name</div><div class="t" style="left:1114px;top:583.84px;font-size:12px;font-weight:normal;color:#111;">Trend</div><div class="t" style="left:1175px;top:583.84px;font-size:12px;font-weight:normal;color:#111;">Visits</div><div class="t" style="left:1251px;top:583.84px;font-size:12px;font-weight:normal;color:#111;">Conversions</div><div class="t" style="left:1355.5px;top:583.84px;font-size:12px;font-weight:normal;color:#111;">%</div><div class="t" style="left:745px;top:616.84px;font-size:12px;font-weight:bold;color:#111;letter-spacing:-0.1px;">Testing Snippet 1 ( 2 )</div><div class="t" style="left:745px;top:638.84px;font-size:12px;font-weight:normal;color:#111;letter-spacing:-0.12px;"><span style="color:#999">Page:</span> Cheese Shop ( Live )</div><div class="t" style="left:745px;top:660.84px;font-size:12px;font-weight:normal;color:#111;letter-spacing:-0.12px;"><span style="color:#999">ID:</span> 34173 ( More )</div><svg style="position:absolute;left:1123px;top:618px" width="20" height="20" viewBox="0 0 20 20"><circle cx="10" cy="10" r="10" fill="#3dcc3a"/><path d="M10 4.3 L14.6 9.2 H11.7 V14.6 H8.3 V9.2 H5.4 Z" fill="#fff"/></svg><div class="t" style="left:1175px;top:616.84px;font-size:12px;font-weight:normal;color:#111;">25</div><div class="t" style="left:1251px;top:616.84px;font-size:12px;font-weight:normal;color:#111;">3</div><div class="t" style="left:1352px;top:616.84px;font-size:12px;font-weight:normal;color:#111;">6%</div><div class="t" style="left:745px;top:706.84px;font-size:12px;font-weight:bold;color:#111;letter-spacing:-0.1px;">Testing Snippet 2 ( 2 )</div><div class="t" style="left:745px;top:728.84px;font-size:12px;font-weight:normal;color:#111;letter-spacing:-0.12px;"><span style="color:#999">Page:</span> Cheese Ad China Shop ( Live )</div><div class="t" style="left:745px;top:750.84px;font-size:12px;font-weight:normal;color:#111;letter-spacing:-0.12px;"><span style="color:#999">ID:</span> 34132 ( More )</div><svg style="position:absolute;left:1123px;top:708px" width="20" height="20" viewBox="0 0 20 20"><circle cx="10" cy="10" r="10" fill="#f5a20f"/><path d="M10 15.7 L14.6 10.8 H11.7 V5.4 H8.3 V10.8 H5.4 Z" fill="#fff"/></svg><div class="t" style="left:1175px;top:706.84px;font-size:12px;font-weight:normal;color:#111;">30</div><div class="t" style="left:1251px;top:706.84px;font-size:12px;font-weight:normal;color:#111;">6</div><div class="t" style="left:1350.5px;top:706.84px;font-size:12px;font-weight:normal;color:#111;">10%</div><div class="t" style="left:745px;top:796.84px;font-size:12px;font-weight:bold;color:#111;letter-spacing:-0.1px;">Testing Snippet 3 ( 2 )</div><div class="t" style="left:745px;top:818.84px;font-size:12px;font-weight:normal;color:#111;letter-spacing:-0.12px;"><span style="color:#999">Page:</span> Cheese Ad Germany Shop ( Live )</div><div class="t" style="left:745px;top:840.84px;font-size:12px;font-weight:normal;color:#111;letter-spacing:-0.12px;"><span style="color:#999">ID:</span> 34125 ( More )</div><svg style="position:absolute;left:1123px;top:798px" width="20" height="20" viewBox="0 0 20 20"><circle cx="10" cy="10" r="10" fill="#f5a20f"/><path d="M10 15.7 L14.6 10.8 H11.7 V5.4 H8.3 V10.8 H5.4 Z" fill="#fff"/></svg><div class="t" style="left:1175px;top:796.84px;font-size:12px;font-weight:normal;color:#111;">40,021</div><div class="t" style="left:1251px;top:796.84px;font-size:12px;font-weight:normal;color:#111;">4,851</div><div class="t" style="left:1350px;top:796.84px;font-size:12px;font-weight:normal;color:#111;">4%</div><div style="position:absolute;left:186px;top:43px;width:221px;height:171px;background:#fff;border:1px solid #bfc7d2;border-radius:0 0 3px 3px"></div><div style="position:absolute;left:187px;top:93px;width:221px;height:1px;background:#e6e9ee"></div><div style="position:absolute;left:187px;top:133px;width:221px;height:1px;background:#e6e9ee"></div><div style="position:absolute;left:187px;top:173px;width:221px;height:1px;background:#e6e9ee"></div><div class="t" style="left:202.5px;top:66.45px;font-size:14px;font-weight:normal;color:#111;letter-spacing:0.3px;">Default Dashboard</div><svg style="position:absolute;left:381px;top:65.5px" width="14.5" height="14.5" viewBox="0 0 14.5 14.5"><circle cx="7.25" cy="7.25" r="5.5825000000000005" fill="#b4c2d0"/><rect x="5.80" y="0" width="2.90" height="7.25" rx="0.87" fill="#b4c2d0" transform="rotate(0 7.25 7.25)"/><rect x="5.80" y="0" width="2.90" height="7.25" rx="0.87" fill="#b4c2d0" transform="rotate(45 7.25 7.25)"/><rect x="5.80" y="0" width="2.90" height="7.25" rx="0.87" fill="#b4c2d0" transform="rotate(90 7.25 7.25)"/><rect x="5.80" y="0" width="2.90" height="7.25" rx="0.87" fill="#b4c2d0" transform="rotate(135 7.25 7.25)"/><rect x="5.80" y="0" width="2.90" height="7.25" rx="0.87" fill="#b4c2d0" transform="rotate(180 7.25 7.25)"/><rect x="5.80" y="0" width="2.90" height="7.25" rx="0.87" fill="#b4c2d0" transform="rotate(225 7.25 7.25)"/><rect x="5.80" y="0" width="2.90" height="7.25" rx="0.87" fill="#b4c2d0" transform="rotate(270 7.25 7.25)"/><rect x="5.80" y="0" width="2.90" height="7.25" rx="0.87" fill="#b4c2d0" transform="rotate(315 7.25 7.25)"/><circle cx="7.25" cy="7.25" r="2.32" fill="#fff"/></svg><div class="t" style="left:202.5px;top:106.45px;font-size:14px;font-weight:normal;color:#111;letter-spacing:0.3px;">Analytics Dashboard</div><svg style="position:absolute;left:381px;top:105.5px" width="14.5" height="14.5" viewBox="0 0 14.5 14.5"><circle cx="7.25" cy="7.25" r="5.5825000000000005" fill="#b4c2d0"/><rect x="5.80" y="0" width="2.90" height="7.25" rx="0.87" fill="#b4c2d0" transform="rotate(0 7.25 7.25)"/><rect x="5.80" y="0" width="2.90" height="7.25" rx="0.87" fill="#b4c2d0" transform="rotate(45 7.25 7.25)"/><rect x="5.80" y="0" width="2.90" height="7.25" rx="0.87" fill="#b4c2d0" transform="rotate(90 7.25 7.25)"/><rect x="5.80" y="0" width="2.90" height="7.25" rx="0.87" fill="#b4c2d0" transform="rotate(135 7.25 7.25)"/><rect x="5.80" y="0" width="2.90" height="7.25" rx="0.87" fill="#b4c2d0" transform="rotate(180 7.25 7.25)"/><rect x="5.80" y="0" width="2.90" height="7.25" rx="0.87" fill="#b4c2d0" transform="rotate(225 7.25 7.25)"/><rect x="5.80" y="0" width="2.90" height="7.25" rx="0.87" fill="#b4c2d0" transform="rotate(270 7.25 7.25)"/><rect x="5.80" y="0" width="2.90" height="7.25" rx="0.87" fill="#b4c2d0" transform="rotate(315 7.25 7.25)"/><circle cx="7.25" cy="7.25" r="2.32" fill="#fff"/></svg><div class="t" style="left:202.5px;top:146.45px;font-size:14px;font-weight:normal;color:#111;letter-spacing:0.3px;">Optimization Dashboard</div><svg style="position:absolute;left:381px;top:145.5px" width="14.5" height="14.5" viewBox="0 0 14.5 14.5"><circle cx="7.25" cy="7.25" r="5.5825000000000005" fill="#b4c2d0"/><rect x="5.80" y="0" width="2.90" height="7.25" rx="0.87" fill="#b4c2d0" transform="rotate(0 7.25 7.25)"/><rect x="5.80" y="0" width="2.90" height="7.25" rx="0.87" fill="#b4c2d0" transform="rotate(45 7.25 7.25)"/><rect x="5.80" y="0" width="2.90" height="7.25" rx="0.87" fill="#b4c2d0" transform="rotate(90 7.25 7.25)"/><rect x="5.80" y="0" width="2.90" height="7.25" rx="0.87" fill="#b4c2d0" transform="rotate(135 7.25 7.25)"/><rect x="5.80" y="0" width="2.90" height="7.25" rx="0.87" fill="#b4c2d0" transform="rotate(180 7.25 7.25)"/><rect x="5.80" y="0" width="2.90" height="7.25" rx="0.87" fill="#b4c2d0" transform="rotate(225 7.25 7.25)"/><rect x="5.80" y="0" width="2.90" height="7.25" rx="0.87" fill="#b4c2d0" transform="rotate(270 7.25 7.25)"/><rect x="5.80" y="0" width="2.90" height="7.25" rx="0.87" fill="#b4c2d0" transform="rotate(315 7.25 7.25)"/><circle cx="7.25" cy="7.25" r="2.32" fill="#fff"/></svg><svg style="position:absolute;left:203.8px;top:186.3px" width="15.4" height="15.4" viewBox="0 0 15.4 15.4"><circle cx="7.7" cy="7.7" r="7.7" fill="#2e95d3"/><rect x="6.35" y="3.16" width="2.69" height="9.09" fill="#fff"/><rect x="3.16" y="6.35" width="9.09" height="2.69" fill="#fff"/></svg><div class="t" style="left:229.5px;top:187.15px;font-size:14px;font-weight:normal;color:#111;letter-spacing:0.3px;">Add Dashboard</div>
</body></html>
